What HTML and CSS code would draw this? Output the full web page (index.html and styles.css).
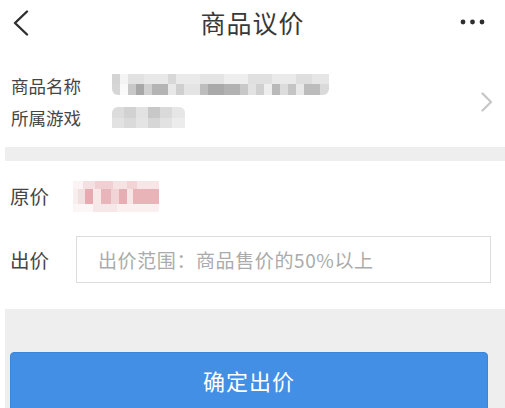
FILE: index.html
```html
<!DOCTYPE html>
<html lang="zh">
<head>
<meta charset="utf-8">
<link rel="stylesheet" href="styles.css">
</head>
<body>
<div class="page">
  <header class="nav">
    <div class="nav-left">
      <svg class="back" width="18" height="26" viewBox="0 0 18 26"><path d="M15 1.5 L3 13 L15 24.5" fill="none" stroke="#2e2e2e" stroke-width="2.4" stroke-linecap="round" stroke-linejoin="round"/></svg>
    </div>
    <h1 class="title">商品议价</h1>
    <div class="nav-right">
      <svg class="more" width="26" height="6" viewBox="0 0 26 6"><circle cx="3" cy="3" r="2.4" fill="#2e2e2e"/><circle cx="12.5" cy="3" r="2.4" fill="#2e2e2e"/><circle cx="22" cy="3" r="2.4" fill="#2e2e2e"/></svg>
    </div>
  </header>

  <section class="info">
    <div class="info-rows">
      <div class="row"><span class="label">商品名称</span><span class="blur blur-name"><i class="b-top"></i><i class="b-bot"></i></span></div>
      <div class="row"><span class="label">所属游戏</span><span class="blur blur-game"></span></div>
    </div>
    <svg class="arrow" width="12" height="20" viewBox="0 0 12 20"><path d="M1.5 1.5 L10 10 L1.5 18.5" fill="none" stroke="#c6c6c6" stroke-width="2.2" stroke-linecap="round" stroke-linejoin="round"/></svg>
  </section>

  <div class="divider"></div>

  <section class="price">
    <div class="prow">
      <span class="plabel">原价</span>
      <span class="blur blur-price"></span>
    </div>
    <div class="prow prow-input">
      <span class="plabel">出价</span>
      <div class="input"><span class="placeholder">出价范围：商品售价的50%以上</span></div>
    </div>
  </section>

  <footer class="footer">
    <button class="submit">确定出价</button>
  </footer>
</div>
</body>
</html>
```

FILE: styles.css
```css
* { box-sizing: border-box; margin: 0; padding: 0; }
html, body { background: #fff; }
body {
  width: 505px;
  height: 408px;
  overflow: hidden;
  font-family: "Noto Sans CJK SC", "Noto Sans", sans-serif;
  color: #333;
}
.page { display: flex; flex-direction: column; }

.nav {
  height: 50px;
  display: grid;
  grid-template-columns: 1fr auto 1fr;
  align-items: center;
}
.nav-left { padding-left: 12px; display: flex; align-items: center; padding-bottom: 4px; }
.title {
  font-size: 25px;
  font-weight: 400;
  color: #383838;
  letter-spacing: 1px;
  line-height: 1;
  padding-bottom: 5px;
}
.nav-right { display: flex; justify-content: flex-end; padding-right: 19px; padding-bottom: 6px; }

.info {
  height: 97px;
  display: flex;
  align-items: center;
  padding-left: 11px;
  padding-right: 12px;
}
.info-rows {
  flex: 1;
  display: flex;
  flex-direction: column;
  padding-top: 5px;
}
.row { height: 32px; display: flex; align-items: center; }
.label { width: 101px; font-size: 17.5px; color: #454545; }

.blur { display: block; }
.blur-name {
  width: 217px; height: 21px;
  display: flex; flex-direction: column;
  border-radius: 0 0 6px 6px;
  overflow: hidden;
  margin-top: -2px;
}
.b-top {
  height: 10px;
  background: linear-gradient(to right,
    #d4d4d4 0 8px, #f4f4f4 8px 16px, #e2e2e2 16px 32px, #e8e8e8 32px 56px, #d8d8d8 56px 64px,
    #eaeaea 64px 88px, #e4e4e4 88px 112px, #eeeeee 112px 136px, #e0e0e0 136px 160px,
    #eaeaea 160px 184px, #dedede 184px 200px, #e6e6e6 200px 217px);
}
.b-bot {
  height: 11px;
  background: linear-gradient(to right,
    #d6d6d6 0 8px, #fafafa 8px 16px, #c8c8c8 16px 24px, #a8a8a8 24px 32px, #d0d0d0 32px 40px,
    #b4b4b4 40px 56px, #e8e8e8 56px 64px, #cfcfcf 64px 72px, #e4e4e4 72px 88px,
    #bdbdbd 88px 96px, #a9a9a9 96px 112px, #b2b2b2 112px 128px, #c8c8c8 128px 136px,
    #e2e2e2 136px 144px, #d0d0d0 144px 152px, #eeeeee 152px 160px, #b9b9b9 160px 168px,
    #dcdcdc 168px 176px, #c4c4c4 176px 184px, #e8e8e8 184px 192px, #bcbcbc 192px 208px, #dadada 208px 217px);
}
.blur-game {
  width: 73px; height: 21px;
  border-radius: 6px 6px 0 0;
  background:
    linear-gradient(to right, #dcdcdc 0 12px, #d2d2d2 12px 24px, #e2e2e2 24px 36px, #c8c8c8 36px 48px, #dadada 48px 60px, #e6e6e6 60px 73px) top / 100% 11px no-repeat,
    linear-gradient(to right, #e2e2e2 0 12px, #dadada 12px 24px, #e4e4e4 24px 36px, #d6d6d6 36px 48px, #e2e2e2 48px 60px, #ececec 60px 73px) bottom / 100% 10px no-repeat;
}
.arrow { flex: none; margin-top: 6px; }

.divider {
  height: 14px;
  margin-left: 5px;
  background: #eeeeee;
}

.price {
  height: 148px;
  display: flex;
  flex-direction: column;
  gap: 23px;
  padding: 16px 14px 0 10px;
}
.prow { height: 36px; display: flex; align-items: center; }
.prow-input { height: 47px; }
.plabel { width: 66px; font-size: 19.5px; color: #454545; }
.blur-price {
  width: 86px; height: 31px;
  margin-left: -3px;
  margin-top: 3px;
  background:
    linear-gradient(to right, #fcf4f4 0 10px, #f4e0e1 10px 22px, #f0d0d2 22px 40px, #f6e2e3 40px 54px, #f2d4d6 54px 64px, #f8e6e7 64px 86px) top / 100% 8px no-repeat,
    linear-gradient(to right, #f8eeee 0 5px, #f0e0e0 5px 12px, #e6aab0 12px 20px, #f8e8e8 20px 28px, #e8b6ba 28px 38px, #f2d4d6 38px 46px, #e5aeb2 46px 54px, #f6e6e6 54px 60px, #e8b4b8 60px 86px) center / 100% 15px no-repeat,
    linear-gradient(to right, #fcf6f6 0 20px, #f6e8e8 20px 44px, #faf0f0 44px 86px) bottom / 100% 8px no-repeat;
}
.input {
  width: 415px;
  height: 47px;
  border: 1px solid #dcdcdc;
  display: flex;
  align-items: center;
  padding-left: 21px;
}
.placeholder { font-size: 19px; color: #ababab; letter-spacing: 0.6px; }

.footer {
  height: 99px;
  margin-left: 5px;
  background: #eeeeee;
  padding-top: 43px;
}
.submit {
  display: flex;
  align-items: center;
  justify-content: center;
  width: 478px;
  height: 60px;
  margin-left: 5px;
  border: 1px solid #3a86db;
  border-radius: 4px;
  background: #428fe5;
  color: #fff;
  font-family: "Noto Sans CJK SC", "Noto Sans", sans-serif;
  font-size: 22px;
  padding-bottom: 5px;
  letter-spacing: 1px;
}
```
